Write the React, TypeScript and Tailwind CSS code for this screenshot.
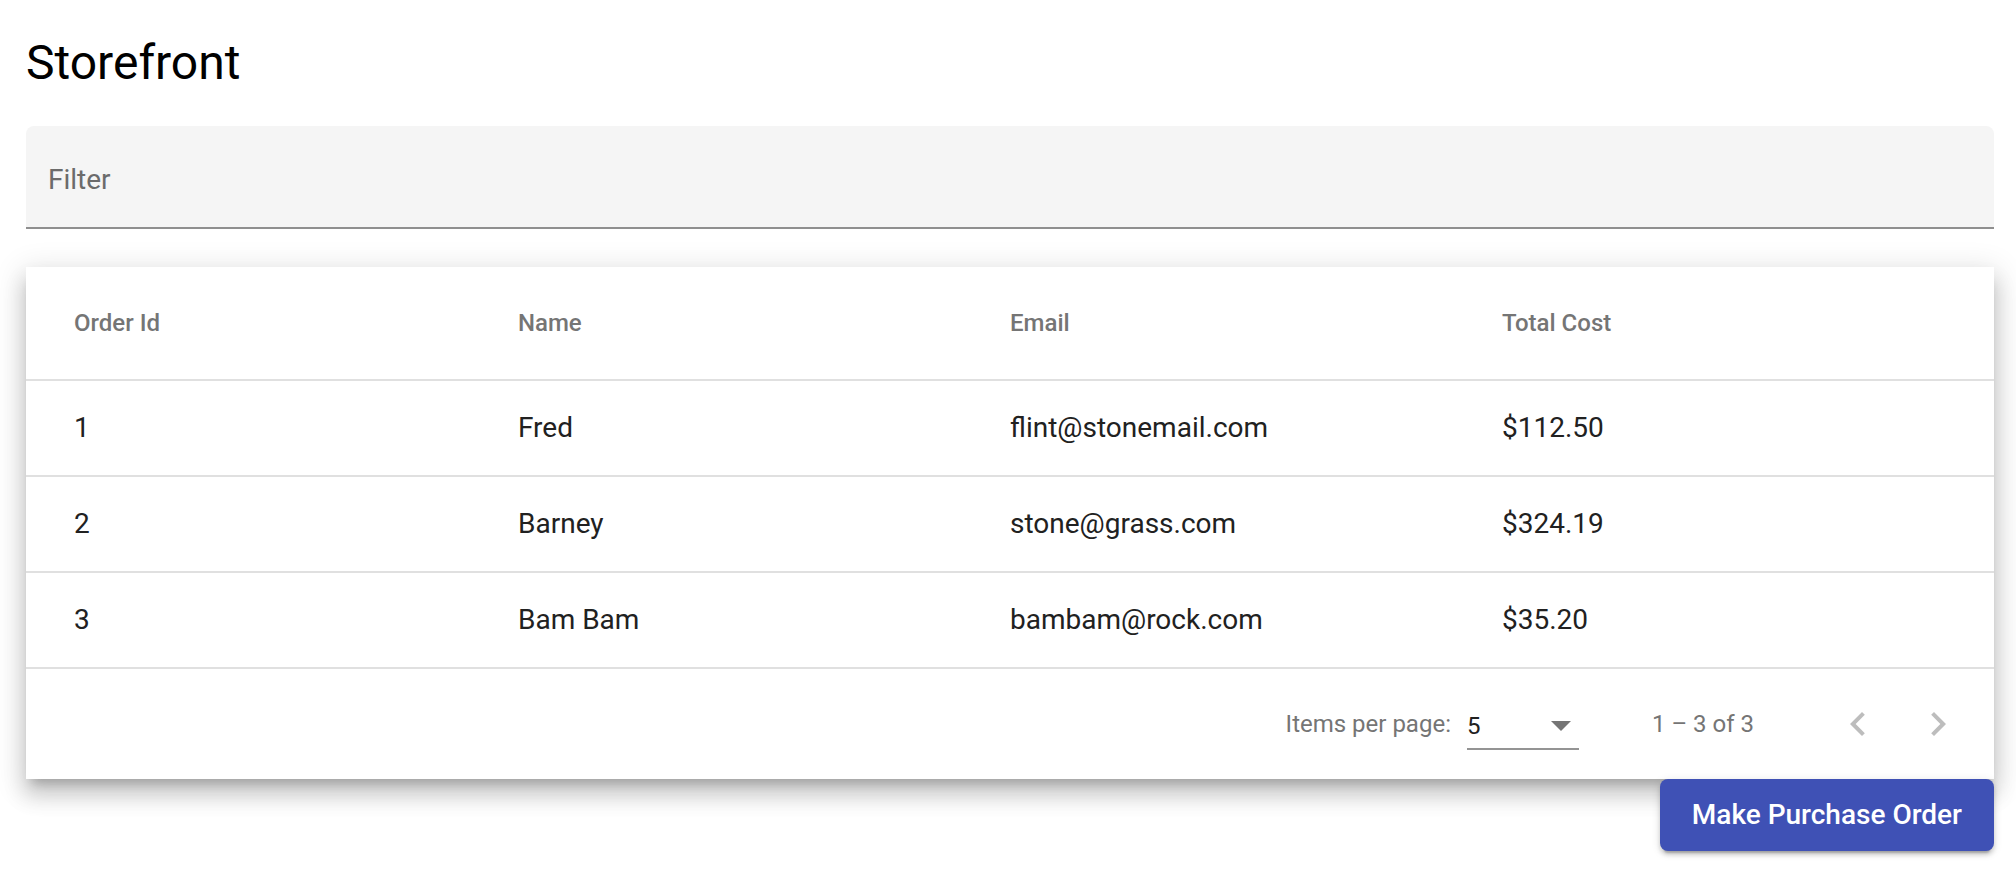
import React from 'react';

interface Order {
  id: number;
  name: string;
  email: string;
  total: string;
}

const ORDERS: Order[] = [
  { id: 1, name: 'Fred', email: 'flint@stonemail.com', total: '$112.50' },
  { id: 2, name: 'Barney', email: 'stone@grass.com', total: '$324.19' },
  { id: 3, name: 'Bam Bam', email: 'bambam@rock.com', total: '$35.20' },
];

const ChevronLeft = () => (
  <svg viewBox="0 0 24 24" className="w-[48px] h-[48px]" fill="#bdbdbd">
    <path d="M15.41 7.41L14 6l-6 6 6 6 1.41-1.41L10.83 12z" />
  </svg>
);

const ChevronRight = () => (
  <svg viewBox="0 0 24 24" className="w-[48px] h-[48px]" fill="#bdbdbd">
    <path d="M10 6L8.59 7.41 13.17 12l-4.58 4.59L10 18l6-6z" />
  </svg>
);

export default function App() {
  return (
    <div className="min-h-screen bg-white pl-[26px] pr-[22px] pt-[31px] font-['Roboto',sans-serif] flex flex-col">
      <h1 className="text-[48px] leading-[64px] font-normal text-black">Storefront</h1>

      {/* Filter field */}
      <div className="mt-[31px] h-[103px] bg-[#f5f5f5] rounded-t-[8px] border-b-2 border-[#8f8f8f] flex items-center pl-[22px] pt-[6px]">
        <span className="text-[28px] text-[#6b6b6b]">Filter</span>
      </div>

      {/* Orders table card */}
      <div className="mt-[38px] bg-white shadow-[0_10px_10px_-6px_rgba(0,0,0,0.2),0_16px_20px_2px_rgba(0,0,0,0.14),0_6px_28px_4px_rgba(0,0,0,0.12)]">
        <div className="grid grid-cols-4 h-[112px] items-center text-[24px] font-medium text-[#757575]">
          <div className="pl-[48px]">Order Id</div>
          <div>Name</div>
          <div>Email</div>
          <div className="pr-[48px]">Total Cost</div>
        </div>
        {ORDERS.map((o) => (
          <div
            key={o.id}
            className="grid grid-cols-4 h-[96px] items-center border-t-2 border-[#e0e0e0] text-[28px] text-[#212121]"
          >
            <div className="pl-[48px]">{o.id}</div>
            <div>{o.name}</div>
            <div>{o.email}</div>
            <div className="pr-[48px]">{o.total}</div>
          </div>
        ))}

        {/* Paginator */}
        <div className="h-[112px] border-t-2 border-[#e0e0e0] flex items-center justify-end pr-[16px] text-[24px] text-[#757575]">
          <span>Items per page:</span>
          <div className="ml-[16px] w-[112px] pt-[10px] pb-[4px] border-b-2 border-[#949494]">
            <div className="h-[36px] flex items-center justify-between pr-[8px]">
              <span className="text-[#212121]">5</span>
              <span className="w-0 h-0 border-l-[10px] border-r-[10px] border-t-[10px] border-l-transparent border-r-transparent border-t-[#757575]" />
            </div>
          </div>
          <span className="ml-[73px]">1 – 3 of 3</span>
          <button type="button" className="ml-[64px] w-[80px] h-[80px] flex items-center justify-center">
            <ChevronLeft />
          </button>
          <button type="button" className="w-[80px] h-[80px] flex items-center justify-center">
            <ChevronRight />
          </button>
        </div>
      </div>

      <button
        type="button"
        className="self-end h-[72px] px-[32px] bg-[#3f51b5] text-white text-[28px] font-medium rounded-[8px] shadow-[0_6px_2px_-4px_rgba(0,0,0,0.2),0_4px_4px_0_rgba(0,0,0,0.14),0_2px_10px_0_rgba(0,0,0,0.12)]"
      >
        Make Purchase Order
      </button>
    </div>
  );
}
